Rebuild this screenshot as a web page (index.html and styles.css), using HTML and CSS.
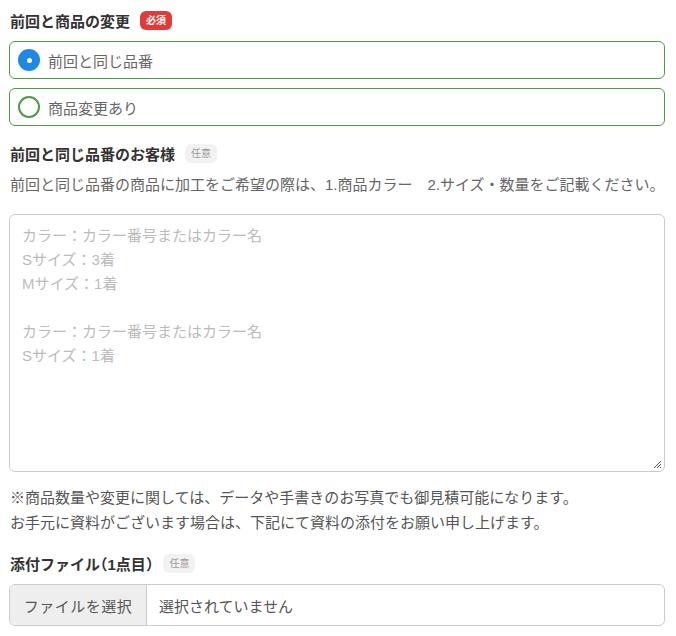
FILE: index.html
```html
<!DOCTYPE html>
<html lang="ja">
<head>
<meta charset="utf-8">
<link rel="stylesheet" href="styles.css">
</head>
<body>
<form class="form">
  <div class="field">
    <div class="label">前回と商品の変更 <span class="badge badge-req">必須</span></div>
    <label class="choice">
      <span class="radio radio-on"></span>
      <span class="choice-text">前回と同じ品番</span>
    </label>
    <label class="choice">
      <span class="radio radio-off"></span>
      <span class="choice-text">商品変更あり</span>
    </label>
  </div>
  <div class="field">
    <div class="label">前回と同じ品番のお客様 <span class="badge badge-opt">任意</span></div>
    <p class="desc">前回と同じ品番の商品に加工をご希望の際は、1.商品カラー　2.サイズ・数量をご記載ください。</p>
    <div class="textarea">
      <div class="ph">カラー：カラー番号またはカラー名</div>
      <div class="ph">Sサイズ：3着</div>
      <div class="ph">Mサイズ：1着</div>
      <div class="ph">&nbsp;</div>
      <div class="ph">カラー：カラー番号またはカラー名</div>
      <div class="ph">Sサイズ：1着</div>
      <svg class="grip" width="10" height="10" viewBox="0 0 10 10"><path d="M9 2 L2 9 M9 5 L5 9 M9 8 L8 9" stroke="#555" stroke-width="1" fill="none"/></svg>
    </div>
    <p class="note">※商品数量や変更に関しては、データや手書きのお写真でも御見積可能になります。<br>お手元に資料がございます場合は、下記にて資料の添付をお願い申し上げます。</p>
  </div>
  <div class="field">
    <div class="label"><span>添付ファイル<span class="half">（</span>1点目<span class="half">）</span></span> <span class="badge badge-opt">任意</span></div>
    <div class="file">
      <span class="file-btn">ファイルを選択</span>
      <span class="file-name">選択されていません</span>
    </div>
  </div>
</form>
</body>
</html>
```
FILE: styles.css
```css
* { box-sizing: border-box; }
body {
  margin: 0;
  background: #fff;
  font-family: "Liberation Sans", "Noto Sans CJK JP", sans-serif;
  color: #333;
}
.form {
  padding: 9px 11px 0 9px;
  display: flex;
  flex-direction: column;
}
.field { display: flex; flex-direction: column; }
.label {
  font-size: 15px;
  font-weight: bold;
  color: #333;
  display: flex;
  align-items: center;
  gap: 10px;
  height: 22px;
  padding-left: 1px;
  margin-bottom: 10px;
}
.half { font-feature-settings: "halt"; }
.badge {
  font-size: 10px;
  font-weight: bold;
  padding: 0 6px;
  height: 19px;
  line-height: 19px;
  border-radius: 6px;
}
.badge-req { background: #e53935; color: #fff; }
.badge-opt { background: #f2f2f2; color: #999; font-weight: normal; }
.choice {
  display: flex;
  align-items: center;
  height: 38px;
  border: 1px solid #4a9d45;
  border-radius: 6px;
  padding-left: 8px;
  margin-bottom: 9px;
  gap: 8px;
}
.radio {
  width: 22px;
  height: 22px;
  border-radius: 50%;
  display: inline-block;
  position: relative;
}
.radio-on { background: #1e88e5; }
.radio-on::after {
  content: "";
  position: absolute;
  left: 8.5px; top: 8.5px;
  width: 5px; height: 5px;
  border-radius: 50%;
  background: #fff;
}
.radio-off { border: 2px solid #4a9d45; }
.choice-text { font-size: 15px; color: #666; }
.field:nth-child(2) { margin-top: 7px; }
.desc {
  margin: 0 0 18px 1px;
  font-size: 15px;
  color: #666;
  line-height: 22px;
  white-space: nowrap;
}
.textarea {
  height: 258px;
  border: 1px solid #ccc;
  border-radius: 6px;
  padding: 9px 12px;
  position: relative;
}
.ph {
  font-size: 15px;
  color: #bbb;
  line-height: 24px;
}
.grip { position: absolute; right: 2px; bottom: 2px; }
.note {
  margin: 13px 0 0 1px;
  font-size: 15px;
  color: #555;
  line-height: 25px;
}
.field:nth-child(3) { margin-top: 17px; }
.file {
  display: flex;
  height: 42px;
  border: 1px solid #ccc;
  border-radius: 6px;
  overflow: hidden;
}
.file-btn {
  width: 137px;
  background: #eee;
  border-right: 1px solid #ccc;
  display: flex;
  align-items: center;
  justify-content: center;
  font-size: 15px;
  color: #555;
  letter-spacing: 0.5px;
}
.file-name {
  display: flex;
  align-items: center;
  padding-left: 12px;
  font-size: 15px;
  color: #555;
}
```
